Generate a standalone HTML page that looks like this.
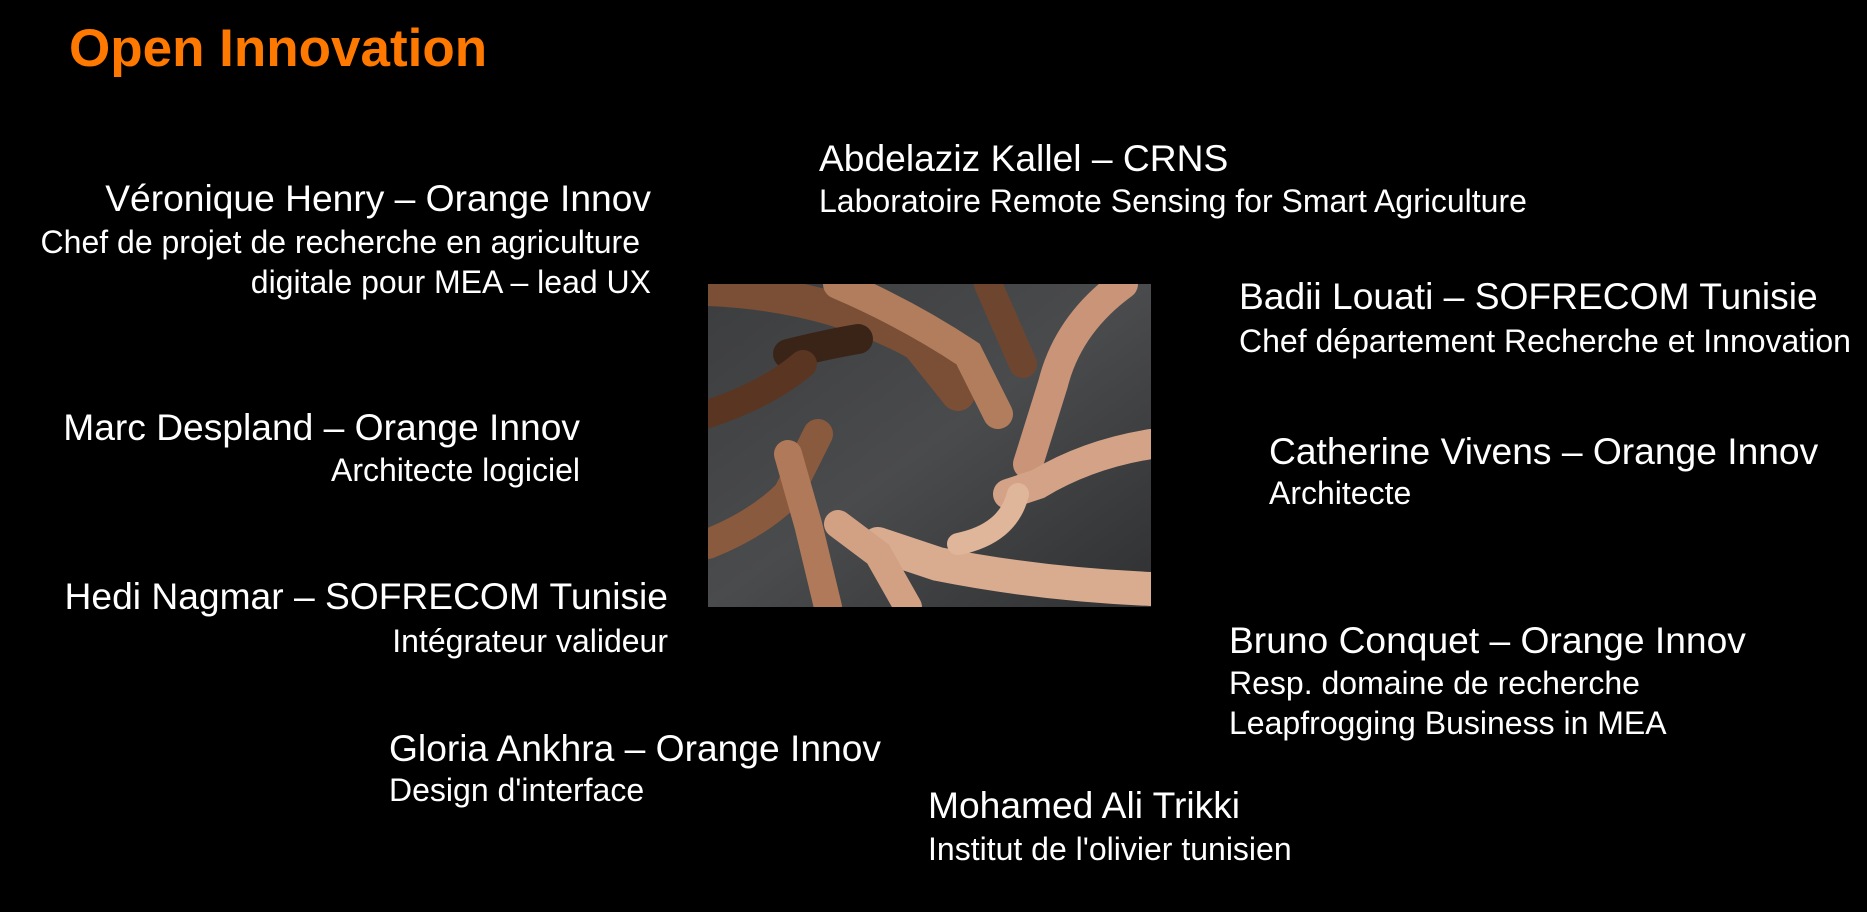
<!DOCTYPE html>
<html><head><meta charset="utf-8"><style>
html,body{margin:0;padding:0;background:#000;}
body{width:1867px;height:912px;position:relative;overflow:hidden;font-family:"Liberation Sans",Arial,sans-serif;color:#fff;}
.t{position:absolute;white-space:nowrap;line-height:1;}
.n{font-size:37.2px;}
.s{font-size:32px;}
.r{text-align:right;}
</style></head><body>
<div class="t" style="left:69px;top:22px;font-size:53px;font-weight:bold;color:#ff7900;">Open Innovation</div>

<div class="t n r" style="right:1216px;top:180px;">Véronique Henry – Orange Innov</div>
<div class="t s r" style="right:1227px;top:226px;">Chef de projet de recherche en agriculture</div>
<div class="t s r" style="right:1216px;top:266px;">digitale pour MEA – lead UX</div>

<div class="t n" style="left:819px;top:140px;">Abdelaziz Kallel – CRNS</div>
<div class="t s" style="left:819px;top:185px;">Laboratoire Remote Sensing for Smart Agriculture</div>

<div class="t n" style="left:1239px;top:278px;">Badii Louati – SOFRECOM Tunisie</div>
<div class="t s" style="left:1239px;top:325px;">Chef département Recherche et Innovation</div>

<div class="t n r" style="right:1287px;top:409px;">Marc Despland – Orange Innov</div>
<div class="t s r" style="right:1287px;top:454px;">Architecte logiciel</div>

<div class="t n" style="left:1269px;top:433px;">Catherine Vivens – Orange Innov</div>
<div class="t s" style="left:1269px;top:477px;">Architecte</div>

<div class="t n r" style="right:1199px;top:578px;">Hedi Nagmar – SOFRECOM Tunisie</div>
<div class="t s r" style="right:1199px;top:625px;">Intégrateur valideur</div>

<div class="t n" style="left:1229px;top:622px;">Bruno Conquet – Orange Innov</div>
<div class="t s" style="left:1229px;top:667px;">Resp. domaine de recherche</div>
<div class="t s" style="left:1229px;top:707px;">Leapfrogging Business in MEA</div>

<div class="t n" style="left:389px;top:730px;">Gloria Ankhra – Orange Innov</div>
<div class="t s" style="left:389px;top:774px;">Design d'interface</div>

<div class="t n" style="left:928px;top:787px;">Mohamed Ali Trikki</div>
<div class="t s" style="left:928px;top:833px;">Institut de l'olivier tunisien</div>

<svg style="position:absolute;left:708px;top:284px" width="443" height="323" viewBox="0 0 443 323">
<defs>
<linearGradient id="bg" x1="0" y1="0" x2="1" y2="1">
<stop offset="0" stop-color="#3c3d3f"/><stop offset="0.5" stop-color="#4a4b4d"/><stop offset="1" stop-color="#2f3032"/></linearGradient>
</defs>
<rect width="443" height="323" fill="url(#bg)"/>
<g fill="none" stroke-linecap="round">
<path d="M0 5 Q120 10 210 60 L250 110" stroke="#7a4f35" stroke-width="34"/>
<path d="M130 0 Q200 30 260 70 L290 130" stroke="#b27d5c" stroke-width="30"/>
<path d="M80 70 Q120 60 150 55" stroke="#3a2418" stroke-width="30"/>
<path d="M0 130 Q60 110 95 80" stroke="#5a3622" stroke-width="28"/>
<path d="M280 0 L315 80" stroke="#6e4630" stroke-width="28"/>
<path d="M415 0 Q360 40 345 100 L320 180" stroke="#c99477" stroke-width="30"/>
<path d="M443 160 Q380 170 330 200 L300 210" stroke="#d4a387" stroke-width="30"/>
<path d="M443 305 Q330 300 230 280 L170 260" stroke="#d9ac90" stroke-width="34"/>
<path d="M0 260 Q50 240 80 210 L110 150" stroke="#8a5a3e" stroke-width="30"/>
<path d="M120 323 L100 240 L80 170" stroke="#b07a5a" stroke-width="28"/>
<path d="M200 323 L170 270 L130 240" stroke="#d2a083" stroke-width="28"/>
<path d="M310 210 Q300 250 250 260" stroke="#e0b69a" stroke-width="22"/>
</g>
</svg>
</body></html>
